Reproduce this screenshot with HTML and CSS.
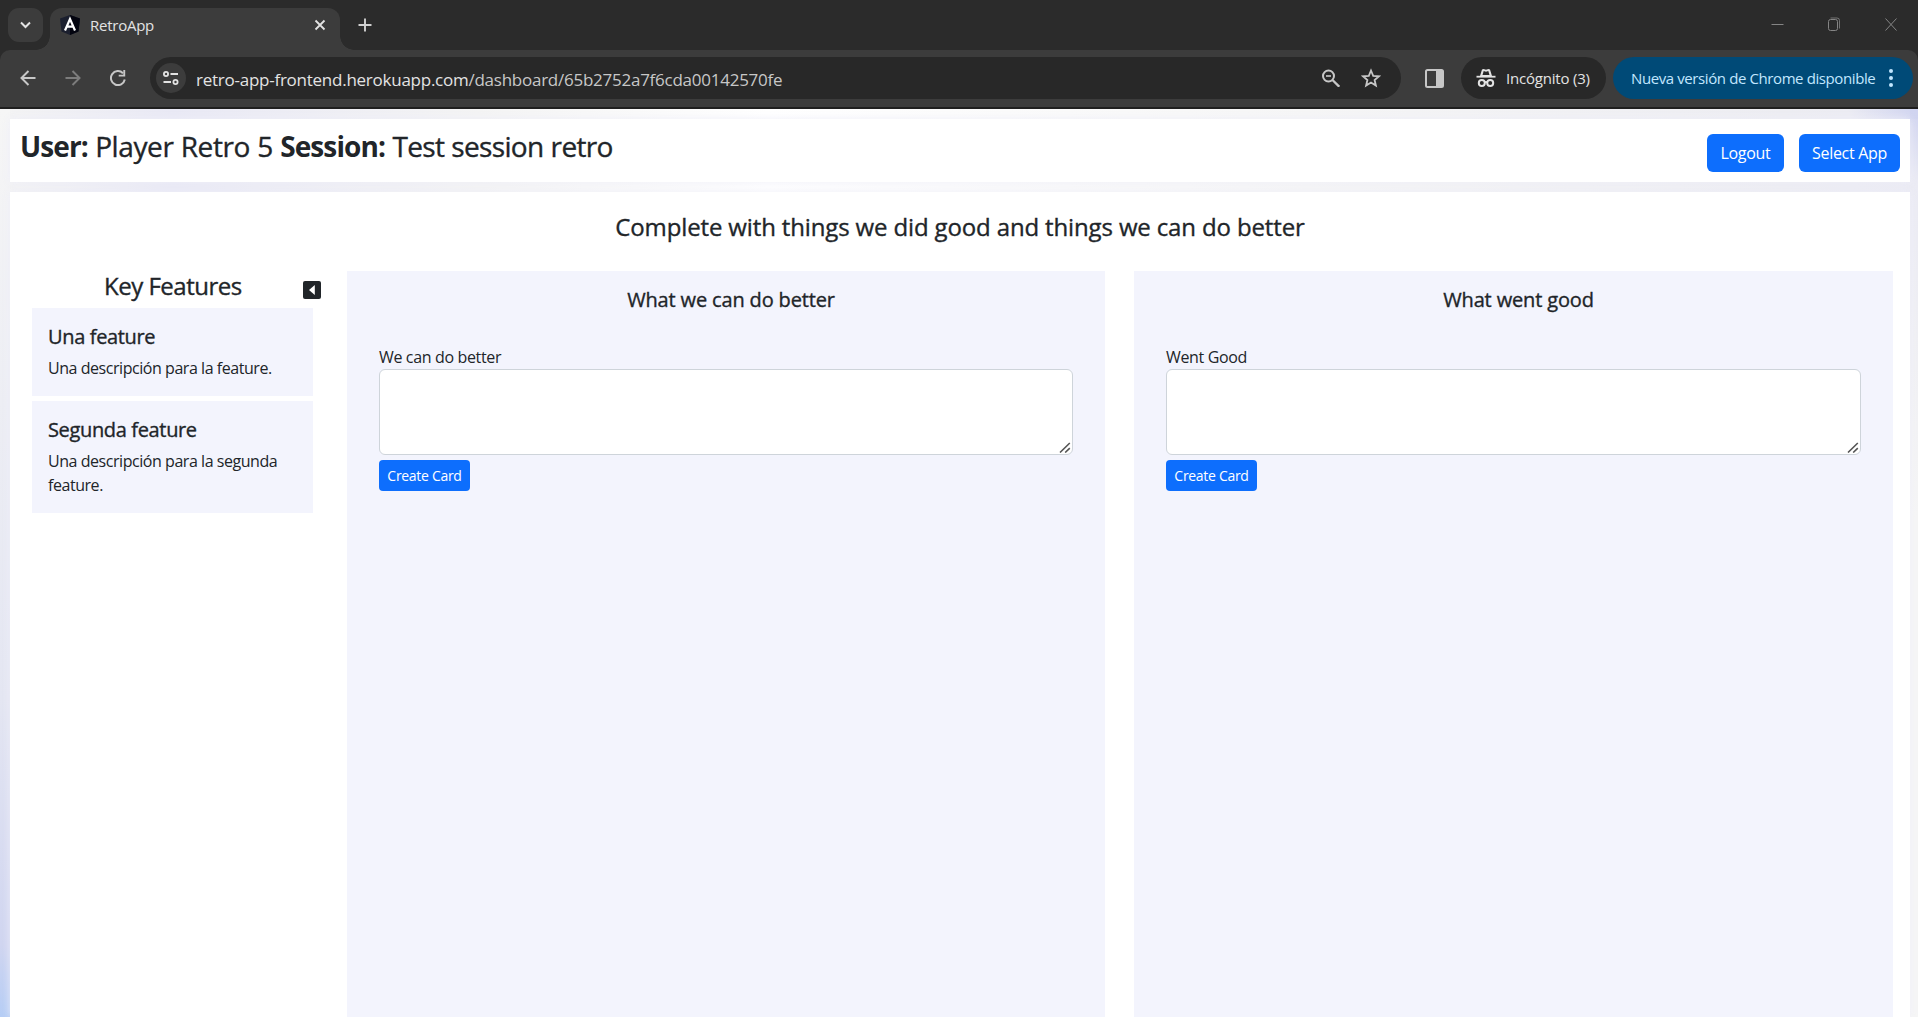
FILE: index.html
```html
<!DOCTYPE html>
<html lang="es">
<head>
<meta charset="utf-8">
<title>RetroApp</title>
<link rel="stylesheet" href="styles.css">
</head>
<body>
<div class="browser">
  <div class="tabstrip">
    <div class="tab-search"><svg width="35" height="34" viewBox="0 0 35 34"><path d="M13 14.5l4.5 4.5 4.5-4.5" fill="none" stroke="#e3e3e3" stroke-width="2"/></svg></div>
    <div class="tab">
      <svg class="favicon" width="20" height="20" viewBox="0 0 20 20"><path d="M10 0l10 3.500-1.500 13L10 20l-8.500-3.500L0 3.500z" fill="#1b1f2e"/><path d="M10 0l10 3.500-1.500 13L10 20z" fill="#03040f"/><path d="M5 15.500L10 4l5 11.500M7 11.700h6" fill="none" stroke="#fff" stroke-width="2.200"/></svg>
      <span class="tab-title">RetroApp</span>
      <svg class="tab-close" width="12" height="12" viewBox="0 0 12 12"><path d="M1.500 1.500l9 9M10.500 1.500l-9 9" stroke="#e3e3e3" stroke-width="1.800"/></svg>
    </div>
    <svg class="tab-new" width="14" height="14" viewBox="0 0 14 14"><path d="M7 .5v13M.5 7h13" stroke="#d0d0d0" stroke-width="1.900"/></svg>
    <div class="window-controls">
      <svg width="14" height="14" viewBox="0 0 14 14"><path d="M1.500 7.500h12" stroke="#858585"/></svg>
      <svg width="14" height="14" viewBox="0 0 14 14"><rect x="1.500" y="2.500" width="9" height="11" rx="2" fill="none" stroke="#858585"/><path d="M3.500 1h6.500a2.500 2.500 0 0 1 2.500 2.500V11.500" fill="none" stroke="#858585" stroke-width=".8"/></svg>
      <svg width="14" height="14" viewBox="0 0 14 14"><path d="M1.500 1.500l11 12M12.500 1.500l-11 12" stroke="#858585"/></svg>
    </div>
  </div>
  <div class="toolbar">
    <svg class="nav" width="16" height="16" viewBox="0 0 16 16"><path d="M15.500 8H2M8.500 1L1.500 8l7 7" fill="none" stroke="#c7c7c7" stroke-width="2"/></svg>
    <svg class="nav" width="16" height="16" viewBox="0 0 16 16"><path d="M.5 8H14M7.500 1l7 7-7 7" fill="none" stroke="#7c7c7c" stroke-width="2"/></svg>
    <svg class="nav" width="16" height="16" viewBox="0 0 16 16"><path d="M14.800 9.500A7 7 0 1 1 13 3.200" fill="none" stroke="#c7c7c7" stroke-width="2"/><path d="M15.200 0v6.500H8.700V4.700h4.600V0z" fill="#c7c7c7"/></svg>
    <div class="omnibox">
      <div class="site-info"><svg width="16" height="14" viewBox="0 0 16 14"><g fill="none" stroke="#e3e3e3" stroke-width="1.800"><circle cx="3" cy="3" r="2.100"/><path d="M7.500 3H15M.5 11H8"/><circle cx="12.500" cy="11" r="2.100"/></g></svg></div>
      <span class="url"><span class="host">retro-app-frontend.herokuapp.com</span><span class="path">/dashboard/65b2752a7f6cda00142570fe</span></span>
      <svg class="zoom" width="18" height="18" viewBox="0 0 18 18"><g fill="none" stroke="#c7c7c7"><circle cx="6.500" cy="7" r="5.500" stroke-width="2"/><path d="M10.500 11l6.800 6.800" stroke-width="2.300"/><path d="M4 7h5" stroke-width="1.600"/></g></svg>
      <svg class="star" width="20" height="20" viewBox="0 0 20 20"><path d="M10 2.500l2.200 5.300 5.700.5-4.300 3.700 1.300 5.600L10 14.600l-4.900 3 1.300-5.600L2.100 8.300l5.700-.5z" fill="none" stroke="#c7c7c7" stroke-width="1.800"/></svg>
    </div>
    <svg class="side-panel" width="19" height="19" viewBox="0 0 19 19"><rect x="1" y="1" width="17" height="17" rx="1.500" fill="none" stroke="#c7c7c7" stroke-width="2"/><path d="M11 1h7v17h-7z" fill="#c7c7c7"/></svg>
    <div class="incognito">
      <svg width="20" height="20" viewBox="0 0 20 20"><path d="M6 1.500L7.500 1l2.500.8 2.500-.8 1.500.5L16 8H4z" fill="#e3e3e3"/><path d="M7.700 3L6.500 7h7l-1.200-4-2.300.8z" fill="#282828"/><path d="M.5 7.800h19v1.800H.5z" fill="#e3e3e3"/><g fill="none" stroke="#e3e3e3" stroke-width="2"><circle cx="5.800" cy="15" r="3"/><circle cx="14.200" cy="15" r="3"/><path d="M8.500 14.500q1.500-1 3 0"/></g></svg>
      <span>Incógnito (3)</span>
    </div>
    <div class="update"><span>Nueva versión de Chrome disponible</span><svg width="4" height="20" viewBox="0 0 4 20"><g fill="#c2e7ff"><circle cx="2" cy="3" r="2"/><circle cx="2" cy="10" r="2"/><circle cx="2" cy="17" r="2"/></g></svg></div>
  </div>
</div>
<main class="page">
  <header class="header">
    <h2 class="session"><b>User:</b> <span class="player">Player Retro 5</span> <b>Session:</b> <span class="name">Test session retro</span></h2>
    <div class="actions"><button class="btn logout">Logout</button><button class="btn select-app">Select App</button></div>
  </header>
  <section class="board">
    <h4 class="board-title">Complete with things we did good and things we can do better</h4>
    <div class="board-body">
      <aside class="features">
        <div class="features-head"><h4>Key Features</h4>
          <svg class="collapse" width="18" height="18" viewBox="0 0 18 18"><rect width="18" height="18" rx="2" fill="#212529"/><path d="M11.800 4v10L6 9z" fill="#fff"/></svg>
        </div>
        <article class="feature"><h5>Una feature</h5><p>Una descripción para la feature.</p></article>
        <article class="feature"><h5>Segunda feature</h5><p>Una descripción para la segunda feature.</p></article>
      </aside>
      <section class="column">
        <h5>What we can do better</h5>
        <label for="better">We can do better</label>
        <div class="field"><textarea id="better"></textarea><svg class="grip" width="12" height="11" viewBox="0 0 12 11"><path d="M1 10.500L10.800 1M6.200 10.500l4.600-4.300" stroke="#555" stroke-width="1.600"/></svg></div>
        <button class="btn btn-sm">Create Card</button>
      </section>
      <section class="column">
        <h5>What went good</h5>
        <label for="good">Went Good</label>
        <div class="field"><textarea id="good"></textarea><svg class="grip" width="12" height="11" viewBox="0 0 12 11"><path d="M1 10.500L10.800 1M6.200 10.500l4.600-4.300" stroke="#555" stroke-width="1.600"/></svg></div>
        <button class="btn btn-sm">Create Card</button>
      </section>
    </div>
  </section>
</main>
</body>
</html>
```
FILE: styles.css
```css
* { box-sizing: border-box; }
html, body { height: 100%; margin: 0; overflow: hidden; }
body {
  display: flex;
  flex-direction: column;
  font: 16px/24px "Segoe UI", "Open Sans", "Noto Sans", sans-serif;
  letter-spacing: -0.35px;
  color: #212529;
}
h2, h4, h5, p { margin: 0; }
svg { display: block; flex: none; }

/* Browser frame */
.browser { flex: none; height: 109px; background: #2b2b2b; color: #e3e3e3; }
.tabstrip { display: flex; height: 50px; padding: 8px 20px 0 8px; }
.tab-search { width: 35px; height: 34px; border-radius: 11px; background: #3c3c3c; }
.tab {
  position: relative;
  display: flex;
  align-items: center;
  width: 290px;
  height: 42px;
  margin-left: 7px;
  padding: 0 14px 8px 10px;
  border-radius: 12px 12px 0 0;
  background: #3c3c3c;
  font-size: 15px;
}
.tab::before, .tab::after {
  content: "";
  position: absolute;
  bottom: 0;
  width: 14px;
  height: 14px;
}
.tab::before { left: -14px; background: radial-gradient(circle at 0 0, transparent 13.5px, #3c3c3c 14px); }
.tab::after { right: -14px; background: radial-gradient(circle at 100% 0, transparent 13.5px, #3c3c3c 14px); }
.tab-title { margin-left: 10px; flex: 1; letter-spacing: -0.25px; }
.tab-new { margin: 10px 0 0 18px; }
.window-controls { display: flex; gap: 43px; margin: 9px 0 0 auto; }
.toolbar {
  display: flex;
  align-items: center;
  height: 59px;
  padding: 0 5px 1px 20px;
  border-bottom: 2px solid #1f1f1f;
  border-radius: 10px 10px 0 0;
  background: #3c3c3c;
  font-size: 15px;
}
.nav { margin-right: 29px; }
.omnibox {
  display: flex;
  align-items: center;
  width: 1251px;
  height: 42px;
  margin-left: -5px;
  padding: 0 20px 0 6px;
  border-radius: 21px;
  background: #282828;
}
.site-info { display: grid; place-items: center; width: 30px; height: 30px; border-radius: 50%; background: #3c3c3c; }
.url { flex: 1; margin-left: 10px; padding-top: 3px; font-size: 17px; letter-spacing: -0.25px; white-space: nowrap; }
.path { color: #c7c7c7; }
.star { margin-left: 21px; }
.side-panel { margin: 0 17px 0 24px; }
.incognito, .update { display: flex; align-items: center; height: 42px; border-radius: 21px; white-space: nowrap; }
.incognito { width: 145px; padding-left: 15px; gap: 10px; background: #282828; letter-spacing: -0.2px; }
.update { width: 300px; margin-left: 7px; padding: 0 20px 0 18px; justify-content: space-between; background: #004a77; color: #c2e7ff; letter-spacing: -0.4px; }

/* Application */
.page {
  flex: 1;
  display: flex;
  flex-direction: column;
  gap: 10px;
  min-height: 0;
  padding: 10px 8px 0 10px;
  background:
    linear-gradient(250deg, #d0d4f0, rgba(237, 237, 242, 0) 85%) right top / 80px 10px no-repeat,
    linear-gradient(#f6f6f6, #e4e6f2 65%, #d0d5f0 92%, #b5cdf5) left / 10px 100% no-repeat,
    linear-gradient(#d0d4f0, #ebebf4 8%, #f0f0f4 25%, #f6f6f6 45%) right / 8px 100% no-repeat,
    linear-gradient(90deg, #f4f4f4, #e9e9f5 9%, #f4f4f4 25%, #fff 40%, #f6f6f6 68%, #ededf2 93%, #ebebf4);
}
.header, .board { background: #fff; box-shadow: 0 0 8px rgba(238, 238, 250, 0.9); }
.header { flex: none; display: flex; justify-content: space-between; height: 63px; padding: 10px 10px 0 10px; }
.session { font-size: 28px; line-height: 34px; font-weight: 400; white-space: nowrap; word-spacing: 0.4px; }
.session b { letter-spacing: -0.9px; }
.player { letter-spacing: -0.4px; }
.name { letter-spacing: -0.65px; }
.session span, h4, h5 { -webkit-text-stroke: 0.35px #212529; }
.actions { display: flex; gap: 15px; padding-top: 5px; }
.btn {
  height: 38px;
  padding: 0;
  border: 0;
  border-radius: 6px;
  background: #0d6efd;
  color: #fff;
  font: inherit;
  letter-spacing: -0.3px;
}
.logout { width: 77px; }
.select-app { width: 101px; }
.board { flex: 1; display: flex; flex-direction: column; min-height: 0; padding: 20px 17px 0 22px; }
h4 { font-size: 24px; line-height: 29px; font-weight: 400; white-space: nowrap; }
h5 { padding-top: 1px; font-size: 20px; line-height: 24px; font-weight: 400; white-space: nowrap; }
.board-title { margin-left: -5px; text-align: center; letter-spacing: -0.14px; }
.board-body { flex: 1; display: grid; grid-template-columns: 286px 758px 1fr; column-gap: 29px; margin-top: 30px; }
.features { width: 289px; }
.features-head { display: flex; justify-content: flex-end; height: 37px; }
.features-head h4 { width: 137px; margin-right: 62px; letter-spacing: -0.5px; }
.collapse { margin-top: 10px; }
.feature { width: 281px; margin-bottom: 5px; padding: 15px 16px 16px; background: #f3f4fd; }
.feature h5 { padding-top: 2px; }
.feature p { margin-top: 7px; letter-spacing: -0.45px; }
.column { display: flex; flex-direction: column; align-items: flex-start; padding: 16px 32px; background: #f3f4fd; }
.column h5 { align-self: center; margin: 0 0 33px 10px; letter-spacing: -0.15px; }
.field { position: relative; width: 100%; height: 86px; margin-bottom: 5px; }
textarea { display: block; width: 100%; height: 100%; margin: 0; border: 1px solid #ced4da; border-radius: 6px; background: #fff; resize: none; }
.grip { position: absolute; right: 2px; bottom: 2px; }
.btn-sm { width: 91px; height: 31px; border-radius: 4px; font-size: 14px; letter-spacing: -0.3px; }
```
